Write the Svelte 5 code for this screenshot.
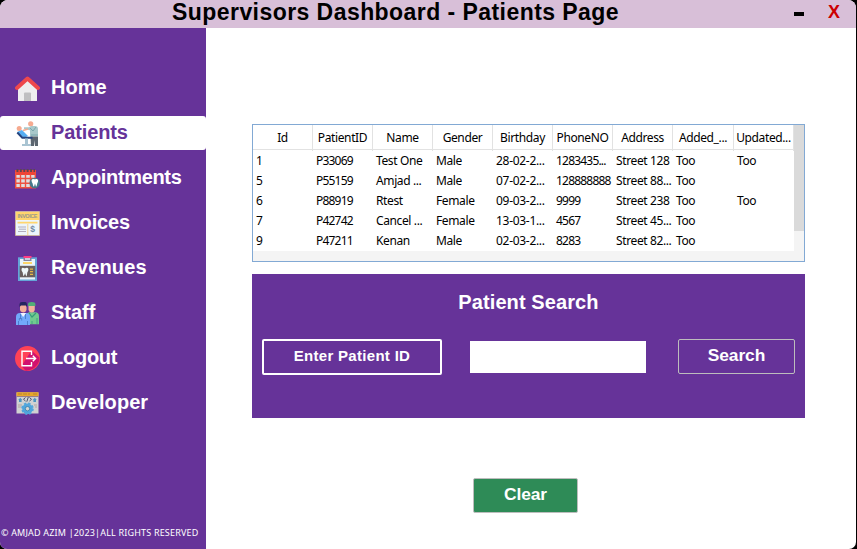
<script>
  const nav = [
    { id: 'home', label: 'Home', spacing: 0 },
    { id: 'patients', label: 'Patients', spacing: -0.12, active: true },
    { id: 'appointments', label: 'Appointments', spacing: -0.33 },
    { id: 'invoices', label: 'Invoices', spacing: -0.12 },
    { id: 'revenues', label: 'Revenues', spacing: 0.15 },
    { id: 'staff', label: 'Staff', spacing: 0 },
    { id: 'logout', label: 'Logout', spacing: -0.25 },
    { id: 'developer', label: 'Developer', spacing: 0.05 }
  ];
  const columns = ['Id', 'PatientID', 'Name', 'Gender', 'Birthday', 'PhoneNO', 'Address', 'Added_...', 'Updated...'];
  const rows = [
    ['1', 'P33069', 'Test One', 'Male', '28-02-2...', '1283435...', 'Street 128', 'Too', 'Too'],
    ['5', 'P55159', 'Amjad ...', 'Male', '07-02-2...', '128888888', 'Street 88...', 'Too', ''],
    ['6', 'P88919', 'Rtest', 'Female', '09-03-2...', '9999', 'Street 238', 'Too', 'Too'],
    ['7', 'P42742', 'Cancel ...', 'Female', '13-03-1...', '4567', 'Street 45...', 'Too', ''],
    ['9', 'P47211', 'Kenan', 'Male', '02-03-2...', '8283', 'Street 82...', 'Too', '']
  ];
  const numeric = [0, 1, 5];
  let query = $state('');
</script>

<div class="window">
  <header>
    <h1>Supervisors Dashboard - Patients Page</h1>
    <div class="controls">
      <button class="min" aria-label="Minimize">
        <svg width="10" height="4" viewBox="0 0 10 4"><path d="M0 0h10v4H0z" /></svg>
      </button>
      <button class="close">X</button>
    </div>
  </header>
  <div class="body">
    <aside>
      <nav>
        {#each nav as item}
          <a class="item" class:active={item.active} href="#{item.id}">
            <svg width="25" height="25" viewBox="0 0 25 25">
              {#if item.id === 'home'}
                <path d="M3 12 12.5 4 22 12V25H3z" fill="#eeeeef" />
                <path d="M9 25v-7.5q0-1 1-1h5q1 0 1 1V25z" fill="#bfbfc1" />
                <path d="M2 12 12.5 2.6 23 12" fill="none" stroke="#ee484c" stroke-width="4" stroke-linecap="round" stroke-linejoin="round" />
              {:else if item.id === 'patients'}
                <circle cx="15.7" cy="2.8" r="2.6" fill="#f6ab91" />
                <path d="M9 6.2h5l2-1.2h4q3 0 3 3v7.5h-8V9.2L9 8z" fill="#a9c9cb" />
                <path d="m15 7 3 3 3-4M16 14h7" fill="none" stroke="#7aa6ac" />
                <path d="M15.5 15.5H23V25h-3v-6l-1 6h-3z" fill="#5c6670" />
                <circle cx="4.2" cy="7.5" r="2.5" fill="#f6aa8f" />
                <path d="m2 11 5-2 6 6-4 2z" fill="#56adf2" />
                <path d="M8 9.5 13 8" stroke="#f6aa8f" stroke-width="1.5" />
                <path d="m2.3 11.5 5 5.2h10.2" fill="none" stroke="#26447e" stroke-width="2" />
                <path d="M10 17.5h3V23h3v2H7v-2h3z" fill="#a9c4d2" />
              {:else if item.id === 'appointments'}
                <path d="M0 4h21v18H0z" fill="#dededf" />
                <path d="M0 4h21v5H0z" fill="#f04435" />
                <path d="M.7 6v15.8h19.6V6M1 12.5h19M1 17.2h19M5.5 8v13.5M10.5 8v13.5M15.5 8v13.5" fill="none" stroke="#ee5140" stroke-width="1.4" />
                <path d="M1.5 4.6h18.5" stroke="#5d4650" stroke-width="3" stroke-dasharray="1.9 1.5" />
                <circle cx="19.7" cy="17" r="5.2" fill="#47788b" />
                <path d="M16.5 14.5q.3-2 2-1.5 1.3.6 2.6 0 1.8-.5 2 1.5 0 1.5-.8 2.8-.4 3-1.3 3.4l-1-3.2-1 3.2q-1 0-1.4-3.2-1-1.4-1.1-3" fill="white" />
              {:else if item.id === 'invoices'}
                <path d="M.5.5h24v24H.5z" fill="#edf5fb" stroke="#d7bf91" stroke-width=".7" />
                <path d="M1 1h23v8H1z" fill="#ffd56d" />
                <text x="12.5" y="6.7" text-anchor="middle" textLength="20" font-family="Liberation Sans" font-weight="bold" font-size="5.5" fill="#9a998b">INVOICE</text>
                <path d="M2.5 11.7h20" stroke="#ffd56d" stroke-width="1.8" />
                <path d="M3 16h8M4 18.2h7M3 20.5h8" stroke="#aaa5b5" stroke-width=".9" />
                <path d="M12.8 13v11" stroke="#f7d48b" />
                <text x="17.7" y="20.8" text-anchor="middle" font-family="Liberation Sans" font-size="8.5" fill="#728aa4">$</text>
              {:else if item.id === 'revenues'}
                <path d="M3 1.3h19V25H3z" fill="#64a5d7" />
                <path d="M5 3h15v20.5H5z" fill="#eaf4fa" />
                <path d="M8.5 2h8v3h-8z" fill="#84839c" />
                <path d="M10 2h5v2h-5z" fill="#c5cddd" />
                <path d="M8.5 0h8v2h-8z" fill="#ff3e83" />
                <path d="M8 7h9" stroke="#ffcf50" stroke-width="1.7" />
                <path d="M4.7 9.8h15.6v11.5H4.7z" fill="#69605f" />
                <path d="M6.5 13q.7-2 2.2-1 1 .6 2.1 0 1.8-1 2.6 1 .2 2-1.1 3.4l-.6 4q-1-.3-1.6-3.4-.8 3.2-1.8 3.2l-.6-3.8q-1.5-1.5-1.2-3.4" fill="#eef7f9" />
                <path d="M15 13.2h3m-3 2.5h3m-3 2.6h3" stroke="#e5b746" stroke-width="1.2" />
              {:else if item.id === 'staff'}
                <path d="M11 23.3v-10l3-2h6q4 0 4 4v8z" fill="#71cb8f" />
                <path d="m14 12 3 4 4-4" fill="none" stroke="#359c79" stroke-width="1.2" />
                <path d="M13.5 4h6.3v4.5q-.4 3-3 3-3.3-.4-3.3-3.3z" fill="#f3b29a" />
                <path d="M13 5V3q0-2 3.7-2t3.7 2v2z" fill="#52ad78" />
                <path d="M17 20v3m5-6v6" stroke="#42a482" />
                <path d="M1 24v-8q0-4 4-4h6.5q3.5 0 3.5 4v8z" fill="#72aafb" />
                <path d="m5.5 12 2.6 4 3-4" fill="#f4f4ff" />
                <path d="M5 3h6.5v5.5q-.5 3-3.2 3-3.3-.4-3.3-3.2z" fill="#f4af9b" />
                <path d="M4.5 6V3.2Q4.5 1 7 1h3q2.5 0 2 5l-1.2-1.5H6z" fill="#252560" />
                <path d="M5.5 13v5m5-5v5M4.3 19.5v-2h2.4v2M3.5 20v4m9-4v4" fill="none" stroke="#4a7bc8" stroke-width=".9" />
              {:else if item.id === 'logout'}
                <circle cx="12.5" cy="12.5" r="12.5" fill="#ff4256" />
                <path d="m16.5 4.5 7.9 7q.5 4-3 8.3-4.4 5.2-11 4.8L6.5 20z" fill="#d1116f" />
                <path d="M16.5 9V5.2H7v14.6h9.5V16M11 12.5h9M17.8 9.8l2.8 2.7-2.8 2.7" fill="none" stroke="#fff" stroke-width="1.4" />
              {:else}
                <path d="M1.5 1.5h22v21h-22z" fill="#d0d2d2" />
                <path d="M1.5 1.2h22v4h-22z" fill="#e7a72a" />
                <path d="M3 3h12m3 0h4" stroke="#b98335" stroke-dasharray="4 1" />
                <path d="M1.8 5.5h21.4" stroke="#815f77" stroke-width=".7" />
                <path d="m5.3 6.8 2 2.2H6.6v2H4V9h-.8zM19.8 6.8l2 2.2H21v2h-2.6V9h-.7z" fill="#4d95c1" />
                <path d="m10.5 6.5-2 1.8 2 1.7M14.5 6.5l2 1.8-2 1.7M13.3 6l-1.5 4.7" fill="none" stroke="#4b5268" />
                <path d="M3 14h4m-4 2h3m13-2h3m-2 2h2" stroke="#b3a4a0" />
                <circle cx="12.5" cy="17.7" r="5.3" fill="#51a6dc" stroke="#51a6dc" stroke-width="2" stroke-dasharray="2.3 1.86" />
                <circle cx="12.5" cy="17.7" r="2.2" fill="#d4d5d2" stroke="#347cab" stroke-width=".8" />
              {/if}
            </svg>
            <span style="letter-spacing: {item.spacing}px">{item.label}</span>
          </a>
        {/each}
      </nav>
      <footer>© AMJAD AZIM |2023|ALL RIGHTS RESERVED</footer>
    </aside>
    <main>
      <section class="grid">
        <div class="data">
          <div class="row head">
            {#each columns as column}<div class="cell">{column}</div>{/each}
          </div>
          {#each rows as row}
            <div class="row">
              {#each row as value, i}<div class="cell" class:numeric={numeric.includes(i)} class:date={i === 4}>{value}</div>{/each}
            </div>
          {/each}
        </div>
        <div class="scroll"><div class="thumb"></div></div>
      </section>
      <section class="search">
        <h2>Patient Search</h2>
        <div class="fields">
          <div class="tag">Enter Patient ID</div>
          <input bind:value={query} aria-label="Patient ID" />
          <button class="find">Search</button>
        </div>
      </section>
      <button class="clear">Clear</button>
    </main>
  </div>
</div>

<style>
  :global(body) {
    background: #000;
    overflow: hidden;
  }
  .window {
    width: 856px;
    height: 549px;
    box-sizing: border-box;
    border-radius: 8px 8px 7px 7px;
    overflow: hidden;
    background: #fff;
    font-family: 'Liberation Sans', Arial, sans-serif;
    display: flex;
    flex-direction: column;
  }
  button {
    font-family: inherit;
    padding: 0;
    margin: 0;
    box-sizing: border-box;
  }
  header {
    height: 28px;
    flex: none;
    background: #d8bfd8;
    display: flex;
    justify-content: space-between;
  }
  h1 {
    margin: 0 0 0 172px;
    font-size: 23px;
    line-height: 24px;
    letter-spacing: 0.44px;
    white-space: nowrap;
  }
  .controls {
    display: flex;
    gap: 20px;
    padding-right: 15px;
  }
  .controls button {
    border: 0;
    background: none;
    font-weight: bold;
    width: 14px;
    height: 24px;
    display: flex;
    align-items: center;
    justify-content: center;
  }
  .controls .min {
    width: 16px;
    height: 28px;
  }
  .controls .close {
    font-size: 18px;
    color: #c00;
  }
  .body {
    flex: 1;
    display: flex;
  }
  aside {
    width: 206px;
    background: #639;
    display: flex;
    flex-direction: column;
    justify-content: space-between;
  }
  nav {
    padding-top: 43px;
    display: flex;
    flex-direction: column;
    gap: 11px;
  }
  .item {
    height: 34px;
    display: flex;
    align-items: center;
    gap: 11px;
    padding-left: 15px;
    color: #fff;
    text-decoration: none;
    font-size: 20px;
    font-weight: bold;
    border-radius: 3px;
  }
  .item span {
    line-height: 24px;
    padding-bottom: 2px;
  }
  .item svg {
    flex: none;
  }
  .active {
    background: #fff;
    color: #639;
  }
  footer {
    font-family: 'Noto Sans', sans-serif;
    font-size: 9px;
    line-height: 12px;
    letter-spacing: 0.18px;
    color: #fff;
    padding: 0 0 10px 1px;
    white-space: nowrap;
  }
  main {
    flex: 1;
    padding: 96px 51px 0 46px;
    display: flex;
    flex-direction: column;
    align-items: center;
  }
  .grid {
    width: 553px;
    height: 138px;
    box-sizing: border-box;
    border: 1px solid #82a9d4;
    background: #f4f4f4;
    display: flex;
    font-family: 'Noto Sans', sans-serif;
    font-size: 12px;
  }
  .data {
    width: 541px;
    height: 126px;
    background: #fff;
  }
  .row {
    display: grid;
    grid-template-columns: repeat(7, 60px) 61px 60px;
    height: 20px;
    line-height: 20px;
  }
  .cell {
    padding-left: 3px;
    white-space: nowrap;
    box-sizing: border-box;
    letter-spacing: -0.38px;
  }
  .cell.numeric {
    letter-spacing: -0.8px;
  }
  .cell.date {
    letter-spacing: -0.3px;
  }
  .head {
    height: 25px;
    line-height: 26px;
    margin-bottom: 1px;
    border-bottom: 1px solid #e2e2e2;
    box-sizing: border-box;
  }
  .head .cell {
    padding: 0;
    text-align: center;
    border-right: 1px solid #e2e2e2;
  }
  .scroll {
    width: 10px;
    height: 136px;
  }
  .thumb {
    height: 106px;
    background: #dadada;
  }
  .search {
    width: 553px;
    height: 144px;
    box-sizing: border-box;
    margin-top: 12px;
    padding: 16px 10px 0;
    background: #639;
    color: #fff;
  }
  h2 {
    margin: 0;
    text-align: center;
    font-size: 20px;
    line-height: 24px;
    letter-spacing: 0.1px;
  }
  .fields {
    display: flex;
    align-items: flex-start;
    margin-top: 25px;
  }
  .tag {
    width: 180px;
    height: 36px;
    box-sizing: border-box;
    border: 2px solid #fff;
    border-radius: 2px;
    text-align: center;
    font-size: 15px;
    font-weight: bold;
    line-height: 30px;
    letter-spacing: 0.3px;
  }
  input {
    width: 176px;
    height: 32px;
    margin: 2px 32px 0 28px;
    box-sizing: border-box;
    border: 0;
    padding: 0 4px;
    background: #fff;
    outline: none;
    font: 15px 'Liberation Sans', sans-serif;
  }
  .find,
  .clear {
    border: 1px solid #bdbdbd;
    border-radius: 2px;
    color: #fff;
    font-size: 17.4px;
    letter-spacing: -0.1px;
    font-weight: bold;
    line-height: 30px;
    height: 35px;
    padding-bottom: 3px;
  }
  .find {
    width: 117px;
    background: none;
  }
  .clear {
    width: 105px;
    margin: 60px 6px 0 0;
    background: #2e8b57;
  }
</style>
